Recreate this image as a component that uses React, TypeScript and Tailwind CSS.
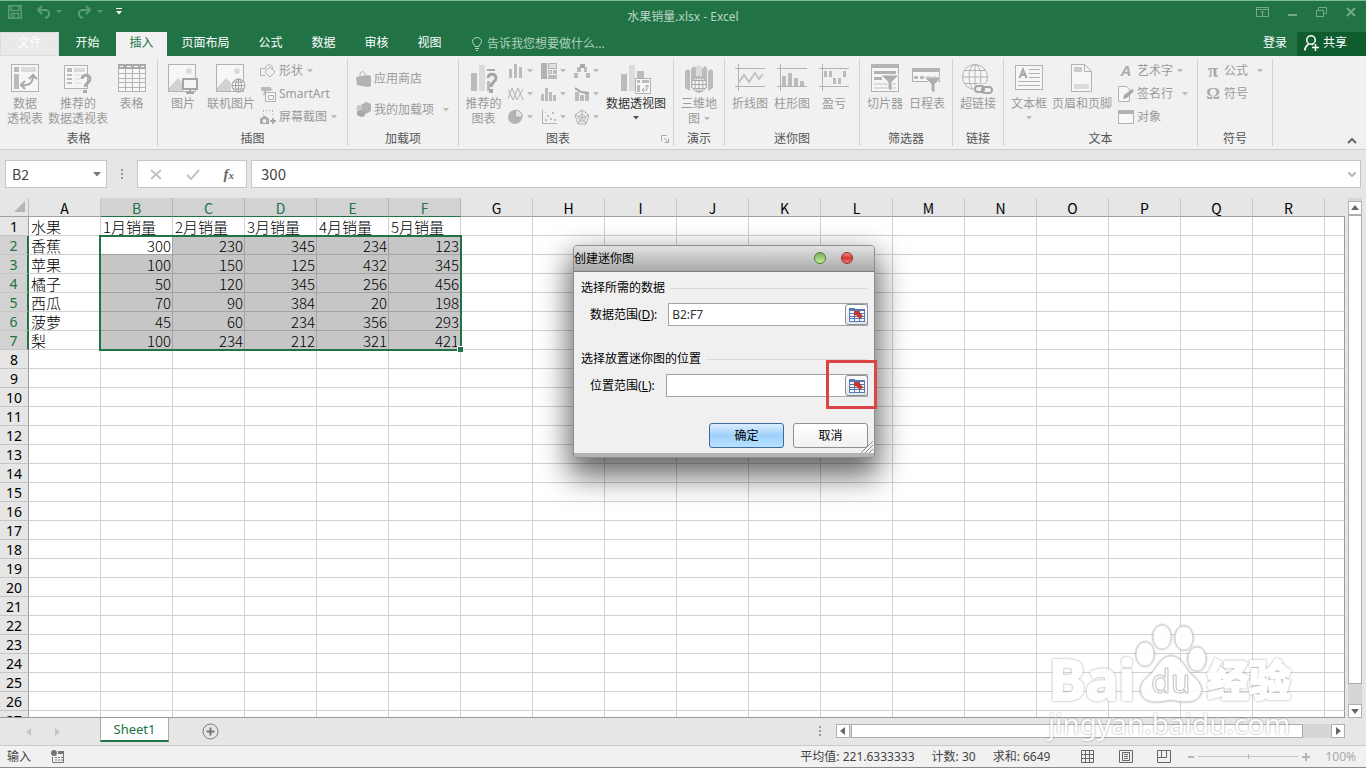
import { useState } from "react";
import type { ReactNode } from "react";
import clsx from "clsx";

const TABS = [
  { name: "文件", cls: "w-[59px] border border-[#dcdcdc] bg-[#e9e9e9] text-white" },
  { name: "开始", cls: "w-[57px] text-white" },
  { name: "插入", cls: "w-[51px] bg-[#f1f1f1] text-[#217346]" },
  { name: "页面布局", cls: "w-[77px] text-white" },
  { name: "公式", cls: "w-[53px] text-white" },
  { name: "数据", cls: "w-[53px] text-white" },
  { name: "审核", cls: "w-[53px] text-white" },
  { name: "视图", cls: "w-[53px] text-white" },
];

const COLS = "ABCDEFGHIJKLMNOPQR".split("");

const ROWS: (string | number)[][] = [
  ["水果", "1月销量", "2月销量", "3月销量", "4月销量", "5月销量"],
  ["香蕉", 300, 230, 345, 234, 123],
  ["苹果", 100, 150, 125, 432, 345],
  ["橘子", 50, 120, 345, 256, 456],
  ["西瓜", 70, 90, 384, 20, 198],
  ["菠萝", 45, 60, 234, 356, 293],
  ["梨", 100, 234, 212, 321, 421],
];

const ROW_COUNT = 27;

/* ---------- small shared pieces ---------- */

function Caret({ dark = false }: { dark?: boolean }) {
  return (
    <svg width="6" height="4" viewBox="0 0 6 4" className={clsx("shrink-0", dark ? "text-[#555]" : "text-[#bbb]")}>
      <path d="M0 0h6L3 3.5z" fill="currentColor" />
    </svg>
  );
}

function Svg({ w, h, children }: { w: number; h: number; children: ReactNode }) {
  return (
    <svg width={w} height={h} viewBox={`0 0 ${w} ${h}`} fill="none" stroke="#b3b1b3" strokeWidth="1" className="shrink-0">
      {children}
    </svg>
  );
}

function Group({ label, className, children, launcher }: {
  label: string;
  className: string;
  children: ReactNode;
  launcher?: boolean;
}) {
  return (
    <section className={clsx("my-[3px] flex h-[87px] shrink-0 flex-col border-r border-[#d2d2d2]", className)}>
      <div className="flex h-[72px] items-start">{children}</div>
      <div className="flex h-[16px] items-center justify-center pt-[2px] text-[#555]">
        <span className="flex-1 text-center">{label}</span>
        {launcher && (
          <button type="button" aria-label="图表选项" className="px-1">
            <Svg w={8} h={8}>
              <path d="M.5 6V.5H6M3 3l4 4M7.5 3.5v4h-4" stroke="#aaa" />
            </Svg>
          </button>
        )}
      </div>
    </section>
  );
}

function Big({ icon, lines, className, caret, active }: {
  icon: ReactNode;
  lines: string[];
  className: string;
  caret?: "inline" | "below";
  active?: boolean;
}) {
  return (
    <button type="button" className={clsx("flex shrink-0 flex-col items-center whitespace-nowrap pt-[5px]", active ? "text-[#333]" : "text-[#9a9a9a]", className)}>
      <span className="flex h-[32px] items-start justify-center">{icon}</span>
      {lines.map((l, i) => (
        <span key={l} className="flex h-[15px] items-center gap-1 leading-[15px]">
          {l}
          {caret === "inline" && i === lines.length - 1 && <Caret />}
        </span>
      ))}
      {caret === "below" && <span className="flex h-[14px] items-center"><Caret dark={active} /></span>}
    </button>
  );
}

function Small({ icon, label, caret, wide }: { icon: ReactNode; label: string; caret?: boolean; wide?: boolean }) {
  return (
    <button type="button" className="flex h-[23px] items-center whitespace-nowrap text-[#9a9a9a]">
      <span className="mr-[3px] flex w-[16px] justify-center">{icon}</span>
      {label}
      {caret && <span className={wide ? "ml-[9px]" : "ml-1"}><Caret /></span>}
    </button>
  );
}

/* ---------- ribbon icons ---------- */

const F = "#bcbabc";
const L = "#dddadd";

const PivotIcon = () => (
  <Svg w={28} h={28}>
    <rect x=".5" y=".5" width="27" height="27" fill="#f7f5f7" />
    <path d="M3 3h5v5H3zM3 10h5v15H3z" fill={F} stroke="none" />
    <path d="M10 3h15v5H10z" fill={L} stroke="none" />
    <path d="M11 21c7 1 11-2 11-9M14 17l-4 4 4 4M18 15l4-4 4 4" strokeWidth="2" stroke="#aaa8aa" />
  </Svg>
);

const RecPivotIcon = () => (
  <Svg w={28} h={30}>
    <rect x=".5" y="1.5" width="23" height="23" fill="#f7f5f7" />
    <path d="M3 4h5v4H3zM3 10h5v2H3zM3 14h5v2H3zM3 18h5v2H3z" fill={F} stroke="none" />
    <path d="M10 4h11v4H10z" fill={L} stroke="none" />
    <path d="M10 11h8M10 15h6M10 19h8" stroke={L} />
    <path d="M18 15c0-5 8-5 8 0 0 4-5 4-5 8" stroke="#aaa8aa" strokeWidth="3" />
    <path d="M19 26h4v3h-4z" fill="#aaa8aa" stroke="none" />
  </Svg>
);

const TableIcon = () => (
  <Svg w={28} h={28}>
    <rect x=".5" y=".5" width="27" height="27" fill="#f9f8f9" />
    <path d="M0 0h28v5H0z" fill="#a9a7a9" stroke="none" />
    <path d="M2 2.5h3M9 2.5h4M16 2.5h4M23 2.5h3" stroke="#fff" />
    <path d="M7.5 5v22M14.5 5v22M21.5 5v22M0 9.5h28M0 14.5h28M0 18.5h28M0 23.5h28" />
  </Svg>
);

const PictureIcon = ({ online = false }: { online?: boolean }) => (
  <Svg w={30} h={30}>
    <rect x=".5" y=".5" width="27" height="27" fill="#f7f5f7" />
    <circle cx="21" cy="7" r="3" fill={L} stroke="none" />
    <path d="M1 24l9-10 5 5v8H1z" fill="#d4d1d4" stroke="none" />
    {online ? (
      <>
        <circle cx="22.5" cy="21.5" r="6.5" fill="#f5f5f5" stroke="#a5a3a5" />
        <path d="M16 21.5h13M22.5 15v13M17 18h11M17 25h11" stroke="#a5a3a5" />
        <ellipse cx="22.5" cy="21.5" rx="3" ry="6.5" stroke="#a5a3a5" />
      </>
    ) : (
      <>
        <rect x="15" y="15" width="14" height="10" fill="#f5f5f5" stroke="#a5a3a5" strokeWidth="2" />
        <path d="M22 25v3M18 29h8" stroke="#a5a3a5" strokeWidth="2" />
      </>
    )}
  </Svg>
);

const ShapesIcon = () => (
  <Svg w={16} h={14}>
    <path d="M6 4.5H.5v7h5M10 3l5 5-5 5-5-5z" />
    <path d="M6 6a3.500 3.500 0 1 1 6 0" />
  </Svg>
);

const SmartArtIcon = () => (
  <Svg w={16} h={16}>
    <path d="M1 1h9l3 3H6v4l-3 2 1-5z" fill={F} stroke="none" />
    <path d="M1 1h10v4H1z" fill={F} stroke="none" />
    <rect x="5.5" y="6.5" width="10" height="9" fill="#f7f5f7" />
    <path d="M8.500 9.500h5v4h-5z" />
  </Svg>
);

const ScreenshotIcon = () => (
  <Svg w={16} h={16}>
    <path d="M3 1.5h10M3.5 2v5M12.5 2v5" strokeDasharray="1 2" />
    <path d="M0 9h2l1-2h3l1 2h2v6H0z" fill="#aaa8aa" stroke="none" />
    <circle cx="4.5" cy="12" r="2" fill="#f1f1f1" stroke="none" />
    <path d="M10 12h6M13 9v6" stroke="#aaa8aa" strokeWidth="2" />
  </Svg>
);

const StoreIcon = () => (
  <Svg w={15} h={16}>
    <path d="M0 6l12-2 3 1v10l-3 1L1 14z" fill="#b4b2b4" stroke="none" />
    <path d="M4 6V3c0-3 5-3 5 0v2" stroke="#b4b2b4" />
  </Svg>
);

const AddinIcon = () => (
  <Svg w={15} h={15}>
    <path d="M5 3l5-3 5 2v7l-5 3-4-3z" fill="#b4b2b4" stroke="none" />
    <circle cx="3.5" cy="6" r="3" fill="#c9c7c9" stroke="none" />
    <path d="M1 9l4-1 4 2v4l-4 1-4-2z" fill="#aaa8aa" stroke="none" />
  </Svg>
);

const RecChartIcon = () => (
  <Svg w={28} h={30}>
    <path d="M1 9h6v18H1z" fill={F} stroke="none" />
    <path d="M9 1h6v26H9z" fill={L} stroke="none" />
    <path d="M17 17h3v10h-3z" fill={F} stroke="none" />
    <path d="M17 6h8" stroke="#aaa8aa" strokeWidth="2" />
    <path d="M18 14c0-5 8-5 8 0 0 4-5 4-5 9" stroke="#a6a4a6" strokeWidth="3" />
    <path d="M19 25h4v4h-4z" fill="#a6a4a6" stroke="none" />
  </Svg>
);

const MINI_CHARTS: { name: string; icon: ReactNode }[] = [
  { name: "柱形图", icon: <path d="M1 6h3v9H1zM6 1h3v14H6zM11 4h3v11h-3z" fill={F} stroke="none" /> },
  {
    name: "树状图",
    icon: (
      <>
        <path d="M0 0h6v16H0z" fill="#b4b2b4" stroke="none" />
        <path d="M7.5.5h8v5h-8zM7.5 7.500h3v3h-3z" fill="#e2dfe2" />
        <path d="M7 12h9v4H7zM12 7h4v4h-4z" fill={F} stroke="none" />
      </>
    ),
  },
  {
    name: "瀑布图",
    icon: (
      <>
        <path d="M0 10h4v5H0zM3 4h4v5H3zM10 4h3v5h-3zM12 10h4v5h-4z" fill={F} stroke="none" />
        <path d="M6 1h5v4H6z" fill="#aaa8aa" stroke="none" />
      </>
    ),
  },
  { name: "折线图", icon: <path d="M0 13L4 2l5 12 6-11M0 3l5 11L10 2l5 12" stroke="#b4b2b4" /> },
  { name: "直方图", icon: <path d="M0 8h3v7H0zM4 2h3v13H4zM8 6h3v9H8zM12 9h3v6h-3z" fill={F} stroke="none" /> },
  {
    name: "组合图",
    icon: (
      <>
        <path d="M1 6h4v9H1zM6 9h4v6H6zM11 7h4v8h-4z" fill={F} stroke="none" />
        <path d="M1 2l6 4 8 1" stroke="#a6a4a6" strokeWidth="2" />
      </>
    ),
  },
  {
    name: "饼图",
    icon: (
      <>
        <circle cx="7" cy="8" r="7" fill="#b4b2b4" stroke="none" />
        <path d="M7.500 8V1a7 7 0 0 1 7 7z" fill="#e8e5e8" stroke="#aaa" />
      </>
    ),
  },
  {
    name: "散点图",
    icon: (
      <>
        <path d="M1.5 1v13.500H16" />
        <path d="M4 10h2v2H4zM6 6h2v2H6zM9 9h2v2H9zM11 3h2v2h-2zM13 10h2v2h-2zM4 3h1v1H4z" fill={F} stroke="none" />
      </>
    ),
  },
  { name: "雷达图", icon: <path d="M8 1l7 5-3 9H4L1 6zM8 1v8M15 6L8 9l4 6M8 9l-4 6M8 9L1 6M8 5l4 3-2 4H6L4 8z" /> },
];

const PivotChartIcon = () => (
  <Svg w={32} h={30}>
    <path d="M1 10h6v17H1zM17 7h7v8h-7z" fill={F} stroke="none" />
    <path d="M9 1h6v26H9z" fill={L} stroke="none" />
    <rect x="15.5" y="14.5" width="15" height="15" fill="#f7f5f7" />
    <path d="M17 16h3v3h-3zM17 21h3v7h-3zM22 16h7v3h-7z" fill={F} stroke="none" />
    <path d="M22 26h5v-5M24 24l-2 2 2 2M25 23l2-2 2 2" stroke="#aaa8aa" />
  </Svg>
);

const MapIcon = () => (
  <Svg w={30} h={30}>
    <path d="M1 7l3-2 2 2v20l-5-3zM7 5l3-3 2 2v20H7zM24 7l3-2 2 2v17l-5 3zM18 5l3-3 2 2v20h-5z" fill={F} stroke="none" />
    <path d="M12 3l3-2 3 2v12h-6z" fill={L} stroke="none" />
    <circle cx="15" cy="20.5" r="7.5" fill="#f5f5f5" stroke="#a9a7a9" />
    <path d="M7.5 20.5h15M15 13v15M9 16.5h12M9 24.5h12" stroke="#a9a7a9" />
    <ellipse cx="15" cy="20.5" rx="4" ry="7.5" stroke="#a9a7a9" />
  </Svg>
);

const SparkIcon = ({ kind }: { kind: "line" | "column" | "winloss" }) => (
  <Svg w={30} h={28}>
    <path d="M0 4.500h30M0 22.500h30M3.500 0v27" />
    {kind === "line" && <path d="M4 18l5-7 5 7 6-9 4 6 4-5" strokeWidth="2" stroke="#c3c1c3" />}
    {kind === "column" && <path d="M5 12h4v10H5zM11 9h4v13h-4zM17 14h4v8h-4zM23 17h4v5h-4z" fill={F} stroke="none" />}
    {kind === "winloss" && <path d="M5 7h3v6H5zM10 7h3v6h-3zM14 14h3v6h-3zM19 14h3v6h-3zM24 7h3v6h-3z" fill={F} stroke="none" />}
  </Svg>
);

const Funnel = () => <path d="M10 11h18l-7 7v9l-4-2v-7z" fill="#b0aeb0" stroke="#f1f1f1" />;

const SlicerIcon = () => (
  <Svg w={28} h={30}>
    <rect x=".5" y=".5" width="27" height="27" fill="#f7f5f7" />
    <path d="M0 0h28v4H0zM3 7h22v3H3zM3 13h8v3H3z" fill="#b4b2b4" stroke="none" />
    <path d="M3 19h22v2H3zM3 23h22v2H3z" fill={L} stroke="none" />
    <Funnel />
  </Svg>
);

const TimelineIcon = () => (
  <Svg w={30} h={30}>
    <rect x=".5" y="4.5" width="27" height="13" fill="#f7f5f7" />
    <path d="M0 4h28v4H0z" fill="#b4b2b4" stroke="none" />
    <path d="M2 12h4v3H2zM8 12h4v3H8zM14 12h4v3h-4zM20 12h4v3h-4z" fill={F} stroke="none" />
    <g transform="translate(2 2)"><Funnel /></g>
  </Svg>
);

const LinkIcon = () => (
  <Svg w={32} h={32}>
    <circle cx="13" cy="13" r="12.5" fill="#f7f5f7" />
    <ellipse cx="13" cy="13" rx="6" ry="12.5" />
    <path d="M.5 13h25M13 .5v25M2.500 6.500h21M2.500 19.500h21" />
    <rect x="13" y="21" width="17" height="9" rx="4" fill="#f1f1f1" stroke="#f1f1f1" strokeWidth="3" />
    <rect x="13" y="22" width="9" height="6" rx="3" stroke="#a6a4a6" strokeWidth="2" />
    <rect x="20" y="23" width="10" height="6" rx="3" stroke="#a6a4a6" strokeWidth="2" />
  </Svg>
);

const TextBoxIcon = () => (
  <Svg w={28} h={28}>
    <rect x=".5" y="1.5" width="27" height="24" fill="#f7f5f7" />
    <path d="M4.500 14L8 5.500 11.500 14M5.500 11h5" strokeWidth="2" stroke="#aaa8aa" />
    <path d="M14 5.500h11M14 9.500h11M14 13.500h11M3 17.500h22M3 21.500h22" />
  </Svg>
);

const HeaderFooterIcon = () => (
  <Svg w={22} h={28}>
    <path d="M.5.500h13l7 7v20H.5z" fill="#f7f5f7" />
    <path d="M13.500.500v7h7" />
    <path d="M3 3h8v5H3z" fill="#cfccd0" stroke="none" />
    <path d="M3 20h15v5H3z" fill={L} stroke="none" />
  </Svg>
);

const SignIcon = () => (
  <Svg w={16} h={16}>
    <path d="M.5.500h8l3 3v12H.5z" fill="#f7f5f7" />
    <path d="M5 13l1-4 8-6 2 2-7 7z" fill="#aaa8aa" stroke="none" />
  </Svg>
);

const ObjectIcon = () => (
  <Svg w={16} h={14}>
    <rect x=".5" y=".5" width="15" height="13" fill="#f9f8f9" />
    <path d="M0 0h16v4H0z" fill="#b4b2b4" stroke="none" />
  </Svg>
);

/* ---------- window parts ---------- */

function TitleBar() {
  return (
    <header className="relative flex h-[32px] items-start justify-between border-t border-[#7fbd98] text-[#74a98a]">
      <div className="flex h-[21px] items-center pl-2 text-[#5c9b78]">
        <button type="button" aria-label="保存" className="mr-[14px]">
          <svg width="14" height="14" viewBox="0 0 14 14" fill="none" stroke="currentColor" strokeWidth="1.500">
            <path d="M.75.75h12.500v12.500H.75zM3 .5v5h8v-5M3.500 13.500v-5h7v5M6 10v3" />
          </svg>
        </button>
        <button type="button" aria-label="撤消" className="mr-[15px] flex items-center gap-[5px]">
          <svg width="15" height="14" viewBox="0 0 15 14" fill="none" stroke="currentColor" strokeWidth="2">
            <path d="M6 1L2 5l4 4M2 5h7c6 0 5 7 0 8" />
          </svg>
          <svg width="6" height="4" viewBox="0 0 6 4"><path d="M0 0h6L3 3z" fill="currentColor" /></svg>
        </button>
        <button type="button" aria-label="恢复" className="mr-[13px] flex items-center gap-[5px]">
          <svg width="15" height="14" viewBox="0 0 15 14" fill="none" stroke="currentColor" strokeWidth="2">
            <path d="M9 1l4 4-4 4M13 5H6c-6 0-5 7 0 8" />
          </svg>
          <svg width="6" height="4" viewBox="0 0 6 4"><path d="M0 0h6L3 3z" fill="currentColor" /></svg>
        </button>
        <button type="button" aria-label="自定义快速访问工具栏">
          <svg width="6" height="7" viewBox="0 0 6 7" fill="#fff"><path d="M0 0h6v1H0zM0 3h6L3 6.500z" /></svg>
        </button>
      </div>
      <h1 className="absolute inset-x-0 top-2 text-center leading-[16px] text-[#b9d5c4]">水果销量.xlsx - Excel</h1>
      <div className="relative flex h-[21px] items-center gap-[19px] pr-[10px]">
        <button type="button" aria-label="功能区显示选项">
          <svg width="13" height="10" viewBox="0 0 13 10" fill="none" stroke="currentColor"><path d="M.5.500h12v9H.5zM0 2.500h13M6.500 9V4M4.500 6l2-2 2 2" /></svg>
        </button>
        <button type="button" aria-label="最小化">
          <svg width="9" height="10" viewBox="0 0 9 10"><path d="M0 7h9v2H0z" fill="currentColor" /></svg>
        </button>
        <button type="button" aria-label="还原">
          <svg width="11" height="10" viewBox="0 0 11 10" fill="none" stroke="currentColor"><path d="M.5 3.500h7v6h-7zM2.500 3V.5h8v6H8" /></svg>
        </button>
        <button type="button" aria-label="关闭">
          <svg width="10" height="10" viewBox="0 0 10 10" fill="none" stroke="currentColor" strokeWidth="2"><path d="M1 1l8 8M9 1L1 9" /></svg>
        </button>
      </div>
    </header>
  );
}

function TabRow() {
  return (
    <nav className="flex h-[24px] items-stretch">
      {TABS.map((t) => (
        <button key={t.name} type="button" className={clsx("shrink-0 pb-[2px] text-center leading-[20px]", t.cls)}>
          {t.name}
        </button>
      ))}
      <button type="button" className="ml-[16px] flex items-center gap-[5px] whitespace-nowrap text-[#b0d1bd]">
        <svg width="10" height="14" viewBox="0 0 10 14" fill="none" stroke="currentColor">
          <path d="M3 9.500C3 7 .5 7 .5 4.500a4.500 4 0 0 1 9 0C9.500 7 7 7 7 9.500zM3 11.500h4M4 13.500h2" />
        </svg>
        告诉我您想要做什么...
      </button>
      <span className="flex-1" />
      <button type="button" className="px-[10px] pb-[2px] text-white">登录</button>
      <button type="button" className="flex w-[69px] items-center gap-[4px] bg-[#0f5c2f] pb-[2px] pl-[7px] text-white">
        <svg width="15" height="16" viewBox="0 0 15 16" fill="none" stroke="currentColor" strokeWidth="1.500">
          <circle cx="7" cy="5" r="4.250" />
          <path d="M.75 15.500c0-4 2-5 4-6.500M8 9l1 1M8 12.500h7M11.500 9v7" />
        </svg>
        共享
      </button>
    </nav>
  );
}

function Ribbon() {
  return (
    <div className="flex h-[94px] shrink-0 overflow-hidden border-b border-[#cfcfcf] bg-[#f1f1f1]">
      <Group label="表格" className="w-[158px]">
        <Big className="w-[50px]" icon={<PivotIcon />} lines={["数据", "透视表"]} />
        <Big className="w-[56px]" icon={<RecPivotIcon />} lines={["推荐的", "数据透视表"]} />
        <Big className="w-[51px]" icon={<TableIcon />} lines={["表格"]} />
      </Group>
      <Group label="插图" className="w-[190px]">
        <Big className="w-[50px]" icon={<PictureIcon />} lines={["图片"]} />
        <Big className="mr-[6px] w-[46px]" icon={<PictureIcon online />} lines={["联机图片"]} />
        <div>
          <Small icon={<ShapesIcon />} label="形状" caret />
          <Small icon={<SmartArtIcon />} label="SmartArt" />
          <Small icon={<ScreenshotIcon />} label="屏幕截图" caret />
        </div>
      </Group>
      <Group label="加载项" className="w-[111px]">
        <div className="flex flex-col gap-2 pt-2 pl-[7px]">
          <Small icon={<StoreIcon />} label="应用商店" />
          <Small icon={<AddinIcon />} label="我的加载项" caret wide />
        </div>
      </Group>
      <Group label="图表" className="w-[215px]" launcher>
        <Big className="w-[49px]" icon={<RecChartIcon />} lines={["推荐的", "图表"]} />
        <div className="grid grid-cols-[33px_33px_33px]">
          {MINI_CHARTS.map((c) => (
            <button key={c.name} type="button" aria-label={c.name} className="flex h-[23px] items-center gap-[3px]">
              <Svg w={16} h={16}>{c.icon}</Svg>
              <Caret />
            </button>
          ))}
        </div>
        <Big className="w-[58px]" icon={<PivotChartIcon />} lines={["数据透视图"]} caret="below" active />
      </Group>
      <Group label="演示" className="w-[51px]">
        <Big className="w-[50px]" icon={<MapIcon />} lines={["三维地", "图"]} caret="inline" />
      </Group>
      <Group label="迷你图" className="w-[135px]">
        <Big className="ml-1 w-[42px]" icon={<SparkIcon kind="line" />} lines={["折线图"]} />
        <Big className="w-[42px]" icon={<SparkIcon kind="column" />} lines={["柱形图"]} />
        <Big className="w-[42px]" icon={<SparkIcon kind="winloss" />} lines={["盈亏"]} />
      </Group>
      <Group label="筛选器" className="w-[93px]">
        <Big className="ml-1 w-[42px]" icon={<SlicerIcon />} lines={["切片器"]} />
        <Big className="w-[42px]" icon={<TimelineIcon />} lines={["日程表"]} />
      </Group>
      <Group label="链接" className="w-[51px]">
        <Big className="w-[50px]" icon={<LinkIcon />} lines={["超链接"]} />
      </Group>
      <Group label="文本" className="w-[194px]">
        <Big className="w-[50px]" icon={<TextBoxIcon />} lines={["文本框"]} caret="below" />
        <Big className="mr-[8px] w-[56px]" icon={<HeaderFooterIcon />} lines={["页眉和页脚"]} />
        <div>
          <Small icon={<span className="font-['Liberation_Sans'] text-[15px] font-bold italic text-[#aaa]">A</span>} label="艺术字" caret />
          <Small icon={<SignIcon />} label="签名行" caret wide />
          <Small icon={<ObjectIcon />} label="对象" />
        </div>
      </Group>
      <Group label="符号" className="w-[75px]">
        <div className="pl-[7px]">
          <Small icon={<span className="font-['Liberation_Serif'] text-[19px] font-bold text-[#aaa]">π</span>} label="公式" caret wide />
          <Small icon={<span className="font-['Liberation_Serif'] text-[17px] font-bold text-[#aaa]">Ω</span>} label="符号" />
        </div>
      </Group>
      <div className="flex flex-1 items-end justify-end pr-[9px] pb-[5px]">
        <button type="button" aria-label="折叠功能区">
          <svg width="10" height="6" viewBox="0 0 10 6" fill="none" stroke="#666" strokeWidth="2"><path d="M1 5l4-4 4 4" /></svg>
        </button>
      </div>
    </div>
  );
}

function FormulaBar() {
  return (
    <div className="flex h-[48px] shrink-0 items-start pt-[10px] pr-[5px] pl-[5px]">
      <div className="flex h-[28px] w-[102px] items-center border border-[#c6c6c6] bg-white pr-[5px]">
        <input aria-label="名称框" defaultValue="B2" className="w-0 flex-1 pl-[6px] font-['Noto_Sans_CJK_SC',sans-serif] text-[14px] leading-[20px] text-[#444] outline-none" />
        <button type="button" aria-label="打开名称列表">
          <svg width="8" height="5" viewBox="0 0 8 5"><path d="M0 0h8L4 4.500z" fill="#777" /></svg>
        </button>
      </div>
      <span className="flex h-[28px] w-[30px] items-center justify-center">
        <svg width="2" height="11" viewBox="0 0 2 11" fill="#999"><path d="M0 0h2v2H0zM0 4h2v2H0zM0 8h2v2H0z" /></svg>
      </span>
      <div className="mr-[4px] flex h-[28px] w-[110px] items-center justify-around border border-[#c6c6c6] bg-white">
        <button type="button" aria-label="取消输入">
          <svg width="12" height="11" viewBox="0 0 12 11" fill="none" stroke="#c2c2c2" strokeWidth="2"><path d="M1 1l10 9M11 1L1 10" /></svg>
        </button>
        <button type="button" aria-label="输入">
          <svg width="14" height="11" viewBox="0 0 14 11" fill="none" stroke="#c2c2c2" strokeWidth="2"><path d="M1 6l4 4 8-9" /></svg>
        </button>
        <button type="button" aria-label="插入函数" className="font-['Liberation_Serif'] text-[15px] leading-[20px] font-bold text-[#666] italic">
          f<span className="text-[11px]">x</span>
        </button>
      </div>
      <div className="flex h-[28px] flex-1 items-center border border-[#c6c6c6] bg-white pr-[4px]">
        <input aria-label="编辑栏" defaultValue="300" className="w-0 flex-1 pl-[9px] font-['Noto_Sans_CJK_SC',sans-serif] text-[15px] leading-[20px] text-[#444] outline-none" />
        <svg width="8" height="5" viewBox="0 0 8 5" fill="none" stroke="#b5b5b5" strokeWidth="2"><path d="M0 0l4 4 4-4" /></svg>
      </div>
    </div>
  );
}

function Sheet() {
  const inSel = (r: number, c: number) => r >= 1 && r <= 6 && c >= 1 && c <= 5;

  return (
    <div className="relative min-w-0 flex-1 overflow-hidden border-b border-[#9a9a9a]">
      <table className="w-full table-fixed border-separate border-spacing-0 bg-white text-[14px]">
        <colgroup>
          <col className="w-[29px]" />
          {COLS.map((c) => <col key={c} className="w-[72px]" />)}
          <col />
        </colgroup>
        <thead>
          <tr>
            <th className="h-[19px] border-r border-b border-r-[#c0c0c0] border-b-[#9f9f9f] bg-[#e6e6e6] p-0">
              <svg width="12" height="12" viewBox="0 0 12 12" className="ml-[14px]"><path d="M11 0v11H0z" fill="#b5b5b5" /></svg>
            </th>
            {COLS.map((c, i) => (
              <th
                key={c}
                scope="col"
                className={clsx(
                  "h-[19px] border-r border-b p-0 pt-[2px] text-center font-['Noto_Sans_CJK_SC',sans-serif] leading-[16px] font-normal",
                  i >= 1 && i <= 5
                    ? "border-r-[#b5b5b5] border-b-[#217346] bg-[#d2d2d2] text-[#217346]"
                    : "border-r-[#c6c6c6] border-b-[#9f9f9f] bg-[#e6e6e6] text-black",
                )}
              >
                {c}
              </th>
            ))}
            <th className="border-b border-[#9f9f9f] bg-[#e6e6e6] p-0" />
          </tr>
        </thead>
        <tbody>
          {Array.from({ length: ROW_COUNT }, (_, r) => (
            <tr key={r}>
              <th
                scope="row"
                className={clsx(
                  "h-[19px] border-r border-b border-b-[#c6c6c6] p-0 pt-[2px] text-center leading-[16px] font-normal",
                  r >= 1 && r <= 6 ? "border-r-2 border-r-[#217346] bg-[#d2d2d2] text-[#217346]" : "border-r-[#9f9f9f] bg-[#e6e6e6] text-black",
                )}
              >
                {r + 1}
              </th>
              {COLS.map((c, i) => {
                const v = ROWS[r]?.[i];
                const sel = inSel(r, i);
                return (
                  <td
                    key={c}
                    className={clsx(
                      "h-[19px] border-r border-b p-0 pt-[2px] font-['Noto_Sans_CJK_SC',sans-serif] text-[15px] leading-[16px] font-light whitespace-nowrap text-black",
                      sel ? "border-[#a3a3a3]" : "border-[#d0d0d0]",
                      sel && !(r === 1 && i === 1) && "bg-[#c6c6c6]",
                      typeof v === "number" ? "pr-[1px] text-right" : "pl-[2px]",
                    )}
                  >
                    {v}
                  </td>
                );
              })}
              <td className="border-r border-b border-r-[#9a9a9a] border-b-[#d0d0d0] p-0" />
            </tr>
          ))}
        </tbody>
      </table>
      {/* selection frame B2:F7 with its fill handle */}
      <div className="pointer-events-none absolute top-[37px] left-[99px] h-[116px] w-[363px] border-2 border-[#217346]">
        <span className="absolute -right-[3px] -bottom-[3px] size-[6px] border-t border-l border-white bg-[#217346]" />
      </div>
    </div>
  );
}

function ScrollButton({ label, path }: { label: string; path: string }) {
  return (
    <button type="button" aria-label={label} className="flex size-[14px] shrink-0 items-center justify-center border border-[#b0b0b0] bg-white">
      <svg width="8" height="8" viewBox="0 0 8 8"><path d={path} fill="#666" /></svg>
    </button>
  );
}

function SheetBar() {
  return (
    <div className="flex h-[27px] shrink-0 items-start">
      <div className="flex h-[27px] w-[100px] items-center gap-[24px] pl-[26px]">
        <button type="button" aria-label="上一张"><svg width="5" height="8" viewBox="0 0 5 8"><path d="M5 0v8L0 4z" fill="#c4c4c4" /></svg></button>
        <button type="button" aria-label="下一张"><svg width="5" height="8" viewBox="0 0 5 8"><path d="M0 0v8l5-4z" fill="#c4c4c4" /></svg></button>
      </div>
      <button type="button" className="-mt-px h-[25px] w-[69px] border-x border-b-2 border-x-[#ababab] border-b-[#217346] bg-white text-[13px] leading-[22px] text-[#217346]">
        Sheet1
      </button>
      <button type="button" aria-label="新工作表" className="mt-[5px] ml-[33px]">
        <svg width="17" height="17" viewBox="0 0 17 17" fill="none" stroke="#777"><circle cx="8.5" cy="8.5" r="7.5" /><path d="M8.500 4.500v8M4.500 8.500h8" strokeWidth="2" /></svg>
      </button>
      <span className="flex-1" />
      <svg width="2" height="11" viewBox="0 0 2 11" fill="#999" className="mt-[8px] mr-[15px]"><path d="M0 0h2v2H0zM0 4h2v2H0zM0 8h2v2H0z" /></svg>
      <div className="mt-[6px] mr-[21px] flex h-[14px] w-[509px] bg-[#d6d6d6]">
        <ScrollButton label="向左滚动" path="M6 0v8L1 4z" />
        <span className="ml-px h-[14px] w-[452px] border border-[#ababab] bg-white" />
        <span className="flex-1" />
        <ScrollButton label="向右滚动" path="M2 0v8l5-4z" />
      </div>
    </div>
  );
}

function StatusBar() {
  return (
    <footer className="flex h-[23px] shrink-0 items-center border-t border-b border-t-[#c8c8c8] border-b-[#8a8a8a] bg-[#f1f1f1] pl-[7px] text-[#444]">
      <span>输入</span>
      <svg width="13" height="13" viewBox="0 0 13 13" fill="none" stroke="#777" className="ml-[20px]">
        <circle cx="3" cy="3" r="3" fill="#777" stroke="none" />
        <path d="M7 1h6v3H7z" fill="#777" stroke="none" />
        <path d="M1.500 7v5.500h11V4M4 7.500h2M7 7.500h2M10 7.500h2M4 10h2M7 10h2M10 10h2" />
      </svg>
      <span className="flex-1" />
      <span>平均值: 221.6333333</span>
      <span className="ml-[17px]">计数: 30</span>
      <span className="ml-[17px]">求和: 6649</span>
      <div className="ml-[31px] flex items-center gap-[24px]">
        <button type="button" aria-label="普通">
          <svg width="14" height="13" viewBox="0 0 14 13" fill="none" stroke="#666"><path d="M.5.500h12v12H.5zM4.500 0v13M8.500 0v13M0 4.500h13M0 8.500h13" /></svg>
        </button>
        <button type="button" aria-label="页面布局">
          <svg width="14" height="13" viewBox="0 0 14 13" fill="none" stroke="#666"><path d="M.5.500h13v12H.5zM3.500 2.500h7v8h-7zM5 4.500h4M5 6.500h4M5 8.500h4" /></svg>
        </button>
        <button type="button" aria-label="分页预览">
          <svg width="14" height="13" viewBox="0 0 14 13" fill="none" stroke="#666"><path d="M.5.500h13v12H.5zM4.500 0v7.500h5V0M.5 7.500h4" /></svg>
        </button>
      </div>
      <div className="ml-[17px] flex items-center gap-[4px]">
        <svg width="6" height="2" viewBox="0 0 6 2"><path d="M0 0h6v2H0z" fill="#b5b5b5" /></svg>
        <span className="flex h-[5px] w-[100px] items-center justify-center bg-[linear-gradient(#c4c4c4,#c4c4c4)] bg-[length:100%_1px] bg-center bg-no-repeat">
          <span className="h-[5px] w-px bg-[#b5b5b5]" />
        </span>
        <svg width="8" height="8" viewBox="0 0 8 8"><path d="M0 3h8v2H0zM3 0h2v8H3z" fill="#b5b5b5" /></svg>
      </div>
      <span className="mr-[10px] ml-[15px] text-[#aaa]">100%</span>
    </footer>
  );
}

/* ---------- dialog ---------- */

function PickButton({ label }: { label: string }) {
  return (
    <button type="button" aria-label={label} className="-mr-px flex h-[21px] w-[23px] shrink-0 items-center justify-center rounded-[3px] border border-[#8a9099] bg-linear-to-b from-white to-[#e3e6ea]">
      <svg width="16" height="14" viewBox="0 0 16 14">
        <path d="M0 0h16v14H0z" fill="#5878b0" />
        <path d="M1 3h4v2H1zM1 6h4v2H1zM1 9h4v1H1zM1 11h4v2H1zM6 9h4v1H6zM6 11h4v2H6zM11 3h4v2h-4zM11 6h4v2h-4zM11 9h4v1h-4zM11 11h4v2h-4zM6 3h4v5H6zM6 0h10v1H6z" fill="#f4f7fc" />
        <path d="M5 3h6L10 4l4 4-3 3-4-4-2 1z" fill="#c4372d" />
      </svg>
    </button>
  );
}

function SectionTitle({ children }: { children: ReactNode }) {
  return (
    <div className="mx-[7px] flex h-[16px] items-center gap-[5px] leading-[16px]">
      {children}
      <span className="h-px flex-1 bg-[#dadada]" />
    </div>
  );
}

function SparklineDialog() {
  const [data, setData] = useState("B2:F7");
  const [place, setPlace] = useState("");

  return (
    <div
      role="dialog"
      aria-label="创建迷你图"
      className="absolute top-[245px] left-[573px] w-[302px] rounded-t-[4px] rounded-b-[3px] border border-[#8e8e8e] bg-[#f0f0f0] text-black shadow-[0_14px_30px_4px_rgba(0,0,0,0.6)]"
    >
      <div className="flex h-[26px] items-center rounded-t-[3px] border-b border-[#7d7d7d] bg-linear-to-b from-[#e2e2e2] to-[#a9a9a9] pr-[21px]">
        <span className="flex-1">创建迷你图</span>
        <button type="button" aria-label="帮助" className="mr-[15px] mb-[2px] size-[12px] rounded-full border border-[#4d7a2c] bg-linear-to-b from-[#7cae57] to-[#c5eda0]" />
        <button type="button" aria-label="关闭" className="mb-[2px] size-[12px] rounded-full border border-[#92302f] bg-linear-to-b from-[#e68a86] via-[#d8302f] to-[#f07a74]" />
      </div>
      <form className="pt-2" onSubmit={(e) => e.preventDefault()}>
        <SectionTitle>选择所需的数据</SectionTitle>
        <div className="mt-[7px] flex h-[23px] items-center pr-[6px] pl-[16px]">
          <label htmlFor="data-range" className="mr-[11px]">数据范围(<u>D</u>):</label>
          <div className="flex h-[23px] min-w-0 flex-1 items-center border border-[#a5a5a5] bg-white">
            <input id="data-range" value={data} onChange={(e) => setData(e.target.value)} className="w-0 flex-1 pl-[3px] text-[#333] outline-none" />
            <PickButton label="选择数据范围" />
          </div>
        </div>
        <div className="h-[25px]" />
        <SectionTitle>选择放置迷你图的位置</SectionTitle>
        <div className="mt-[7px] flex h-[23px] items-center pr-[6px] pl-[16px]">
          <label htmlFor="place-range" className="mr-[11px]">位置范围(<u>L</u>):</label>
          <div className="relative flex h-[23px] min-w-0 flex-1 items-center border border-[#a5a5a5] bg-white">
            <input id="place-range" value={place} onChange={(e) => setPlace(e.target.value)} className="w-0 flex-1 pl-[3px] outline-none" />
            <PickButton label="选择位置范围" />
            {/* red callout round the picker */}
            <span className="pointer-events-none absolute -top-[15px] -right-[10px] h-[49px] w-[51px] border-3 border-[#dc4448]" />
          </div>
        </div>
        <div className="flex justify-end gap-[9px] pt-[26px] pr-[6px] pb-[5px]">
          <button type="submit" className="h-[25px] w-[75px] rounded-[3px] border border-[#3f6a9c] bg-linear-to-b from-[#dbeeff] via-[#9fd0fb] to-[#b9e2ff]">确定</button>
          <button type="button" className="h-[25px] w-[75px] rounded-[3px] border border-[#8f8f8f] bg-linear-to-b from-white to-[#f1f1f1]">取消</button>
        </div>
      </form>
      <div className="h-[4px] bg-[#b3b3b3]" />
      <svg width="12" height="12" viewBox="0 0 12 12" stroke="#8f8f8f" className="absolute right-[1px] bottom-[4px]">
        <path d="M0 12L12 0M4 12l8-8M8 12l4-4" />
      </svg>
    </div>
  );
}

function Watermark() {
  return (
    <div className="pointer-events-none absolute right-[68px] bottom-[28px] flex w-[250px] flex-col opacity-90 [filter:drop-shadow(0_0_1px_#999)]">
      <svg width="250" height="86" viewBox="0 0 250 86" fill="#fff" stroke="#fff" strokeWidth="2" strokeLinejoin="round">
        <text x="1" y="80" fontSize="55" fontWeight="700" fontFamily="Noto Sans">Bai</text>
        <text x="159" y="76" fontSize="42" fontWeight="900" fontFamily="Noto Sans CJK SC">经验</text>
        <g stroke="#d2d2d2" strokeWidth="1">
          <ellipse cx="97" cy="34" rx="9" ry="12" />
          <ellipse cx="114" cy="17" rx="9" ry="12" />
          <ellipse cx="136" cy="18" rx="9" ry="12" />
          <ellipse cx="149" cy="39" rx="9" ry="12" />
          <path d="M123 36c10 0 14 12 20 18 7 6 12 12 10 19-3 10-14 10-30 7-16 3-27 3-30-7-2-8 3-13 10-19 6-6 10-18 20-18z" />
          <text x="103" y="73" fontSize="32" fontFamily="Noto Sans" stroke="#bbb">du</text>
        </g>
      </svg>
      <span className="font-['Noto_Sans'] text-[28px] leading-[34px] text-white">jingyan.baidu.com</span>
    </div>
  );
}

export default function App() {
  return (
    <div className="relative flex h-screen flex-col overflow-hidden bg-[#e6e6e6] font-['Noto_Sans','Noto_Sans_CJK_SC',sans-serif] text-[12px] leading-[16px]">
      <div className="shrink-0 bg-[#217346]">
        <TitleBar />
        <TabRow />
      </div>
      <Ribbon />
      <FormulaBar />
      <main className="flex min-h-0 flex-1">
        <Sheet />
        <div className="mr-[4px] ml-[3px] flex w-[14px] flex-col bg-[#d6d6d6] pt-[3px]">
          <ScrollButton label="向上滚动" path="M0 6h8L4 1z" />
          <span className="h-[469px] border border-[#ababab] bg-white" />
          <span className="flex-1" />
          <ScrollButton label="向下滚动" path="M0 2h8L4 7z" />
        </div>
      </main>
      <SheetBar />
      <StatusBar />
      <Watermark />
      <SparklineDialog />
    </div>
  );
}
